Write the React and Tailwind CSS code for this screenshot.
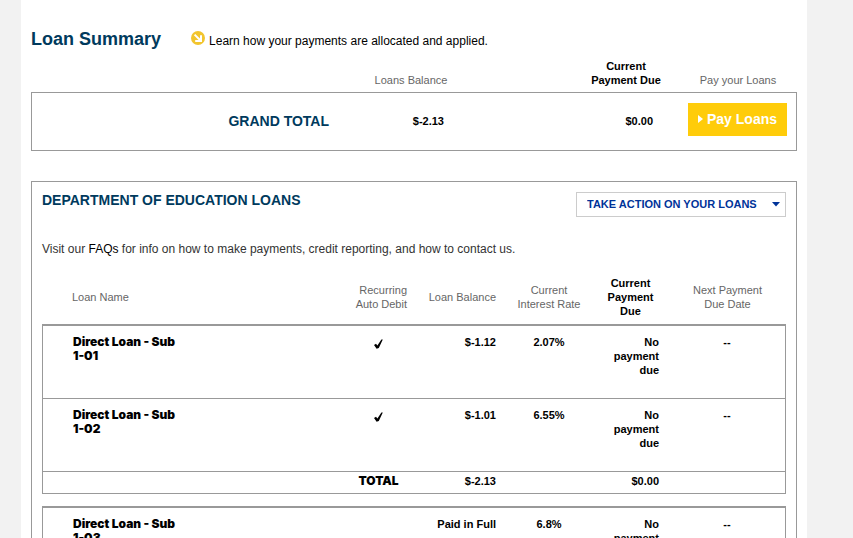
import React, { useState } from "react";

const activeLoans = [
  { name: "Direct Loan - Sub", seq: "1-01", autoDebit: true, balance: "$-1.12", rate: "2.07%", due: "No payment due", next: "--" },
  { name: "Direct Loan - Sub", seq: "1-02", autoDebit: true, balance: "$-1.01", rate: "6.55%", due: "No payment due", next: "--" },
];

const paidLoans = [
  { name: "Direct Loan - Sub", seq: "1-03", autoDebit: false, balance: "Paid in Full", rate: "6.8%", due: "No payment due", next: "--" },
];

function ArrowBadge() {
  return (
    <svg className="w-[14px] h-[14px]" viewBox="0 0 14 14" aria-hidden="true">
      <circle cx="7" cy="7" r="7" fill="#f2c52e" />
      <path d="M3.6 3.6 L9 9" stroke="#fff" strokeWidth="2" />
      <path d="M10 4.2 V10 H4.2" fill="none" stroke="#fff" strokeWidth="2" />
    </svg>
  );
}

function Check() {
  return (
    <svg className="w-[9px] h-[10px] mx-auto mt-1" viewBox="0 0 9 10" role="img" aria-label="Yes">
      <path d="M0 6 L2 4.8 L3.4 6.6 L7.4 0.6 L8.8 0.6 L4.8 9 L2.6 9.8 Z" fill="#000" />
    </svg>
  );
}

function LoanRow({ loan, first }) {
  const cell = first
    ? "border-t-2 border-b border-[#999] pt-[9px] pb-[21px] first:border-l last:border-r"
    : "border-b border-[#999] pt-[9px] pb-[21px] first:border-l last:border-r";
  return (
    <tr className="align-top font-bold">
      <td className={`${cell} pl-[30px] font-['Inter',sans-serif] text-[12px] font-black`}>
        {loan.name}
        <br />
        {loan.seq}
      </td>
      <td className={cell}>{loan.autoDebit && <Check />}</td>
      <td className={`${cell} px-[10px] text-right`}>{loan.balance}</td>
      <td className={`${cell} px-[10px] text-center`}>{loan.rate}</td>
      <td className={`${cell} px-[10px] text-right`}>{loan.due}</td>
      <td className={`${cell} px-5 text-center`}>{loan.next}</td>
    </tr>
  );
}

export default function App() {
  const [action, setAction] = useState("");
  const totalCell = "border-b border-[#999] pt-[2px] pb-[5px] first:border-l last:border-r";

  return (
    <div className="min-h-screen bg-[#f2f2f2] pl-[21px] pr-[46px] font-['Liberation_Sans',Arial,sans-serif] text-[11px] leading-[14px] text-black">
      <main className="min-h-screen bg-white px-[10px] pt-[27px] pb-8">
        <div className="flex items-baseline">
          <h1 className="text-[18px] leading-6 font-bold text-[#003a5d]">Loan Summary</h1>
          <a href="#allocation" className="ml-[30px] flex items-baseline gap-1 text-[12px]">
            <ArrowBadge />
            Learn how your payments are allocated and applied.
          </a>
        </div>

        <table className="mt-2 w-full table-fixed border-separate border-spacing-0">
          <colgroup>
            <col />
            <col className="w-[234px]" />
            <col className="w-[106px]" />
            <col className="w-[118px]" />
          </colgroup>
          <thead>
            <tr className="align-bottom text-[#666]">
              <td></td>
              <th className="pr-[90px] pb-[5px] font-normal">Loans Balance</th>
              <th className="pb-[5px] font-bold text-black">
                Current
                <br />
                Payment Due
              </th>
              <th className="pb-[5px] font-normal">Pay your Loans</th>
            </tr>
          </thead>
          <tbody>
            <tr className="font-bold">
              <th className="border-y border-l border-[#999] pr-[10px] pb-[2px] text-right text-[14px] text-[#003a5d]">GRAND TOTAL</th>
              <td className="border-y border-[#999] pr-[129px] pb-[2px] text-right">$-2.13</td>
              <td className="border-y border-[#999] pr-[26px] pb-[2px] text-right">$0.00</td>
              <td className="border-y border-r border-[#999] pt-[10px] pr-[9px] pb-[14px]">
                <button className="ml-auto flex h-[33px] w-[99px] items-center justify-center gap-1 bg-[#ffcc0a] pb-[2px] text-[14px] font-bold text-white">
                  <svg className="w-[5px] h-[8px]" viewBox="0 0 5 8" aria-hidden="true">
                    <path d="M0 0 L5 4 L0 8 Z" fill="#fff" />
                  </svg>
                  Pay Loans
                </button>
              </td>
            </tr>
          </tbody>
        </table>

        <section className="mt-[30px] border border-[#999] p-[10px]">
          <div className="flex items-start justify-between">
            <h2 className="text-[14px] leading-4 font-bold text-[#003a5d]">DEPARTMENT OF EDUCATION LOANS</h2>
            <div className="relative">
              <select
                aria-label="Take action on your loans"
                value={action}
                onChange={(e) => setAction(e.target.value)}
                className="block h-[25px] w-[210px] appearance-none border border-[#ccc] bg-white pb-[2px] pl-[10px] text-[11px] font-bold text-[#003399]"
              >
                <option value="">TAKE ACTION ON YOUR LOANS</option>
              </select>
              <svg className="pointer-events-none absolute right-[6px] top-[10px] w-[8px] h-[5px]" viewBox="0 0 8 5" aria-hidden="true">
                <path d="M0 0 H8 L4 4.5 Z" fill="#003399" />
              </svg>
            </div>
          </div>

          <p className="mt-[25px] text-[12px] text-[#333]">
            Visit our <a href="#faqs" className="text-black">FAQs</a> for info on how to make payments, credit reporting, and how to contact us.
          </p>

          <table className="mt-5 w-full table-fixed border-separate border-spacing-0">
            <colgroup>
              <col />
              <col className="w-[77px]" />
              <col className="w-[89px]" />
              <col className="w-[86px]" />
              <col className="w-[77px]" />
              <col className="w-[117px]" />
            </colgroup>
            <thead>
              <tr className="text-[#666]">
                <th className="pl-[30px] pb-[6px] text-left font-normal">Loan Name</th>
                <th className="px-[10px] pb-[6px] text-right font-normal">Recurring Auto Debit</th>
                <th className="px-[10px] pb-[6px] text-right font-normal">Loan Balance</th>
                <th className="px-[10px] pb-[6px] font-normal">Current Interest Rate</th>
                <th className="px-[10px] pb-[6px] font-bold text-black">Current Payment Due</th>
                <th className="px-5 pb-[6px] font-normal">Next Payment Due Date</th>
              </tr>
            </thead>
            <tbody>
              {activeLoans.map((loan, i) => (
                <LoanRow key={loan.seq} loan={loan} first={i === 0} />
              ))}
              <tr className="font-bold">
                <td className={totalCell}></td>
                <td className={`${totalCell} text-center font-['Inter',sans-serif] text-[12px] font-black`}>TOTAL</td>
                <td className={`${totalCell} px-[10px] text-right`}>$-2.13</td>
                <td className={totalCell}></td>
                <td className={`${totalCell} px-[10px] text-right`}>$0.00</td>
                <td className={totalCell}></td>
              </tr>
              <tr>
                <td colSpan={6} className="h-3"></td>
              </tr>
            </tbody>
            <tbody>
              {paidLoans.map((loan, i) => (
                <LoanRow key={loan.seq} loan={loan} first={i === 0} />
              ))}
            </tbody>
          </table>
        </section>
      </main>
    </div>
  );
}
